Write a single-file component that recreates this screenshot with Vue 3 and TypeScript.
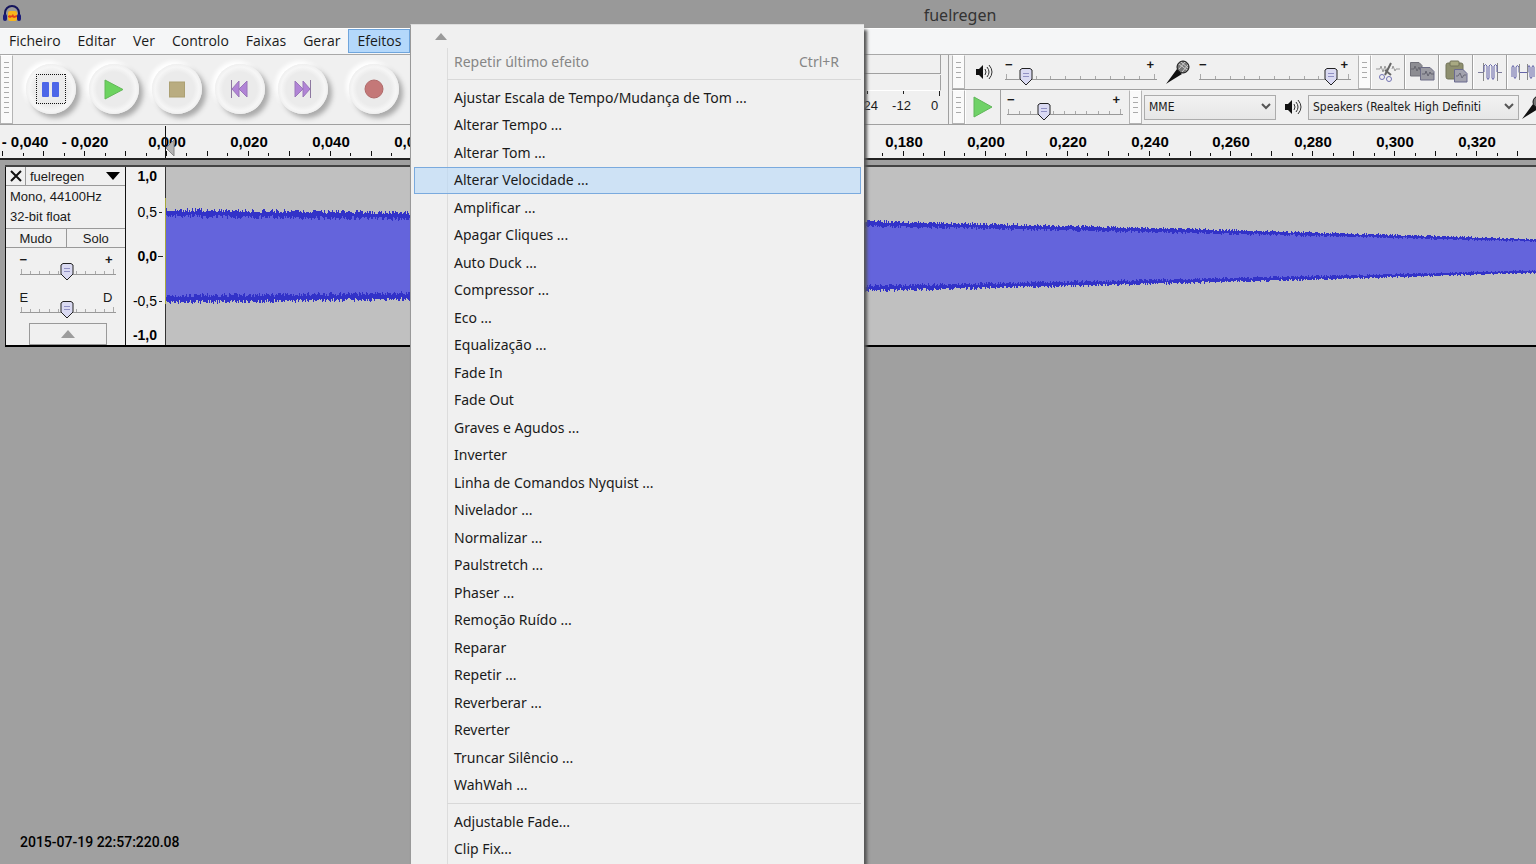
<script setup lang="ts">
import { computed, reactive, ref } from 'vue'

interface MenuEntry {
  label: string
  shortcut?: string
}

const menus: string[] = ['Ficheiro', 'Editar', 'Ver', 'Controlo', 'Faixas', 'Gerar', 'Efeitos']
const openMenu = ref('Efeitos')

const effects: MenuEntry[] = [
  'Ajustar Escala de Tempo/Mudança de Tom ...',
  'Alterar Tempo ...',
  'Alterar Tom ...',
  'Alterar Velocidade ...',
  'Amplificar ...',
  'Apagar Cliques ...',
  'Auto Duck ...',
  'Compressor ...',
  'Eco ...',
  'Equalização ...',
  'Fade In',
  'Fade Out',
  'Graves e Agudos ...',
  'Inverter',
  'Linha de Comandos Nyquist ...',
  'Nivelador ...',
  'Normalizar ...',
  'Paulstretch ...',
  'Phaser ...',
  'Remoção Ruído ...',
  'Reparar',
  'Repetir ...',
  'Reverberar ...',
  'Reverter',
  'Truncar Silêncio ...',
  'WahWah ...',
].map((label) => ({ label }))
const plugins: MenuEntry[] = [{ label: 'Adjustable Fade...' }, { label: 'Clip Fix...' }]
const highlighted = ref('Alterar Velocidade ...')

interface SliderSpec {
  label: string
  low: string
  high: string
  width: number
  ticks: number
  value: number
}

const sliders = reactive<Record<string, SliderSpec>>({
  output: { label: 'Volume de saída', low: '−', high: '+', width: 152, ticks: 11, value: 13 },
  input: { label: 'Volume de entrada', low: '−', high: '+', width: 152, ticks: 11, value: 88 },
  speed: { label: 'Velocidade de reprodução', low: '−', high: '+', width: 116, ticks: 11, value: 31 },
  gain: { label: 'Ganho', low: '−', high: '+', width: 96, ticks: 11, value: 50 },
  pan: { label: 'Panorâmica', low: 'E', high: 'D', width: 96, ticks: 11, value: 50 },
})

const thumbX = (s: SliderSpec): number => Math.round(2 + ((s.width - 4) * s.value) / 100)
const tickX = (s: SliderSpec, i: number): number =>
  Math.round(1 + ((s.width - 4) * i) / (s.ticks - 1)) + 0.5

const host = ref('MME')
const speaker = ref('Speakers (Realtek High Definiti')

/* Timeline: pixels per second and the pixel where time is zero. */
const SCALE = 4094
const ORIGIN = 166
const timeX = (t: number): number => Math.round(ORIGIN + t * SCALE)

const ticks = computed(() => {
  const out: { x: number; h: number }[] = []
  for (let i = -8; i <= 140; i++) out.push({ x: timeX(i * 0.005), h: i % 2 === 0 ? 5 : 3 })
  return out
})
const labels = computed(() => {
  const out: { x: number; text: string }[] = []
  for (let i = -2; i <= 16; i++) {
    const body = (Math.abs(i) * 0.02).toFixed(3).replace('.', ',')
    /* The first label is kept inside the left edge. */
    out.push({ x: Math.max(25, timeX(i * 0.02) + 1), text: i < 0 ? `- ${body}` : body })
  }
  return out
})

/* Decaying envelope with a small jitter on each column. */
let seed = 7
const random = (): number => {
  seed = (seed * 16807) % 2147483647
  return seed / 2147483647
}
const MID = 89
const wave = (() => {
  const peakTop: string[] = []
  const peakBottom: string[] = []
  const rmsTop: string[] = []
  const rmsBottom: string[] = []
  for (let x = 1; x < 2400; x++) {
    const level = Math.max(0, 48.5 - 0.0122 * x - 0.00000757 * x * x)
    const jitter = (level / 46) * 4
    const up = Math.round(MID - level + random() * jitter)
    const down = Math.round(MID + level - random() * jitter)
    const rms = level * 0.82
    const rmsUp = Math.round(MID - rms + (random() - 0.5) * jitter)
    const rmsDown = Math.round(MID + rms - (random() - 0.5) * jitter)
    peakTop.push(`${x},${up} ${x + 1},${up}`)
    peakBottom.unshift(`${x + 1},${down} ${x},${down}`)
    rmsTop.push(`${x},${rmsUp} ${x + 1},${rmsUp}`)
    rmsBottom.unshift(`${x + 1},${rmsDown} ${x},${rmsDown}`)
  }
  return {
    peak: [...peakTop, ...peakBottom].join(' '),
    rms: [...rmsTop, ...rmsBottom].join(' '),
  }
})()
</script>

<template>
  <div class="window">
    <header class="titlebar">
      <svg class="logo" viewBox="0 0 20 18" width="20" height="18" aria-hidden="true">
        <rect x="6" y="6" width="9" height="10" rx="2" fill="#f7b51c" />
        <path d="M6 11l2-1 1 1 2-2 1 2 3-1v2l-3 1-2-1-2 1-2-1z" fill="#e2401b" />
        <path d="M3 13V8a7 7 0 0 1 14 0v5" fill="none" stroke="#14145c" stroke-width="2" />
        <rect x="1" y="9" width="4" height="7" rx="2" fill="#1c1c78" />
        <rect x="15" y="9" width="4" height="7" rx="2" fill="#1c1c78" />
      </svg>
      <h1 class="title">fuelregen</h1>
    </header>

    <nav class="menubar">
      <button
        v-for="m in menus"
        :key="m"
        type="button"
        class="menu-button"
        :class="{ open: m === openMenu }"
        @click="openMenu = m"
      >
        {{ m }}
      </button>
    </nav>

    <section class="toolbars">
      <div class="transport">
        <span class="grip"></span>
        <div class="discs">
          <button type="button" class="disc" aria-label="Pausa">
            <svg width="30" height="30" viewBox="0 0 30 30">
              <path
                d="M0 0.5H30M0 29.5H30M0.5 0V30M29.5 0V30"
                fill="none"
                stroke="#111"
                stroke-dasharray="1 1"
                shape-rendering="crispEdges"
              />
              <rect x="6" y="8" width="7" height="15" rx="1" fill="#4c66e8" />
              <rect x="16" y="8" width="7" height="15" rx="1" fill="#4c66e8" />
            </svg>
          </button>
          <button type="button" class="disc" aria-label="Reproduzir">
            <svg width="30" height="30" viewBox="0 0 30 30">
              <path d="M6 6L24 15.500 6 25z" fill="#6cd35f" stroke="#62b858" />
            </svg>
          </button>
          <button type="button" class="disc" aria-label="Parar">
            <svg width="30" height="30" viewBox="0 0 30 30">
              <rect x="7.500" y="8" width="15" height="15" fill="#b9ac80" stroke="#aca073" />
            </svg>
          </button>
          <button type="button" class="disc" aria-label="Saltar para o início">
            <svg width="30" height="30" viewBox="0 0 30 30">
              <path d="M14 7v16L7 15zM22 7v16l-8-8z" fill="#b184d6" stroke="#9a76ba" />
              <path d="M6.500 6v18" stroke="#8d78a0" />
            </svg>
          </button>
          <button type="button" class="disc" aria-label="Saltar para o fim">
            <svg width="30" height="30" viewBox="0 0 30 30">
              <path d="M7 7v16l8-8zM15 7v16l7-8z" fill="#b184d6" stroke="#9a76ba" />
              <path d="M22.500 6v18" stroke="#8d78a0" />
            </svg>
          </button>
          <button type="button" class="disc record" aria-label="Gravar">
            <svg width="30" height="30" viewBox="0 0 30 30">
              <circle cx="15" cy="15" r="9" fill="#c47878" stroke="#b06a6a" />
            </svg>
          </button>
        </div>
      </div>

      <div class="meter">
        <div class="meter-bar"></div>
        <div class="meter-bar"></div>
        <div class="meter-scale">
          <span>-24</span>
          <span>-12</span>
          <span>0</span>
        </div>
      </div>

      <div class="side">
        <div class="side-row">
          <span class="grip"></span>
          <svg class="speaker lead" width="18" height="18" viewBox="0 0 18 18" aria-hidden="true">
            <path d="M1 6h3l4-4v14l-4-4H1z" fill="#111" />
            <path d="M10 6q2 3 0 6M12 4q4 5 0 10M14 2q6 7 0 14" fill="none" stroke="#333" />
          </svg>
          <label class="slider wide">
            <span class="ends"><b>{{ sliders.output.low }}</b><b>{{ sliders.output.high }}</b></span>
            <svg :width="sliders.output.width" height="22" aria-hidden="true">
              <path class="rail" :d="`M0 14.5H${sliders.output.width}`" />
              <path
                v-for="i in sliders.output.ticks"
                :key="i"
                class="notch"
                :d="`M${tickX(sliders.output, i - 1)} ${i === 1 || i === sliders.output.ticks ? 9 : 11}V14`"
              />
              <g :transform="`translate(${thumbX(sliders.output)} 3)`">
                <path class="thumb" d="M-6 2L-4 0.5H4L6 2V11L0 17L-6 11Z" />
                <path class="thumb-lines" d="M-3 5.5H3M-3 8.5H3" />
              </g>
            </svg>
            <input v-model.number="sliders.output.value" type="range" :aria-label="sliders.output.label" />
          </label>
          <svg class="mic" width="26" height="26" viewBox="0 0 26 26" aria-hidden="true">
            <path d="M1 25L12 10l5 5L4 23z" fill="#111" />
            <circle cx="18" cy="8" r="6" fill="#777" stroke="#111" />
            <path d="M14 5l8 6M16 3l7 6M14 10l6-7M17 13l6-7" stroke="#ccc" />
          </svg>
          <label class="slider wide">
            <span class="ends"><b>{{ sliders.input.low }}</b><b>{{ sliders.input.high }}</b></span>
            <svg :width="sliders.input.width" height="22" aria-hidden="true">
              <path class="rail" :d="`M0 14.5H${sliders.input.width}`" />
              <path
                v-for="i in sliders.input.ticks"
                :key="i"
                class="notch"
                :d="`M${tickX(sliders.input, i - 1)} ${i === 1 || i === sliders.input.ticks ? 9 : 11}V14`"
              />
              <g :transform="`translate(${thumbX(sliders.input)} 3)`">
                <path class="thumb" d="M-6 2L-4 0.5H4L6 2V11L0 17L-6 11Z" />
                <path class="thumb-lines" d="M-3 5.5H3M-3 8.5H3" />
              </g>
            </svg>
            <input v-model.number="sliders.input.value" type="range" :aria-label="sliders.input.label" />
          </label>
          <span class="grip edit-grip"></span>
          <div class="edit">
            <button type="button" class="tool" aria-label="Cortar">
              <svg width="28" height="26" viewBox="0 0 28 26">
                <path d="M2 10h4l1-3 2 6 2-6 2 5 2-4M18 10l1-3 2 5 1-2h4" fill="none" stroke="#999" />
                <path d="M17 4L11 16M11 11l6 5" stroke="#666" stroke-width="2" fill="none" />
                <circle cx="8" cy="18" r="2.500" fill="none" stroke="#7373b4" />
                <circle cx="15" cy="20" r="2.500" fill="none" stroke="#7373b4" />
              </svg>
            </button>
            <button type="button" class="tool" aria-label="Copiar">
              <svg width="28" height="26" viewBox="0 0 28 26">
                <path d="M2.500 3.500H11l3 3V17H2.500z" fill="#8d8d92" stroke="#707078" />
                <path d="M3 10h3l1-3 2 5 2-4 1 3" fill="none" stroke="#66666e" />
                <path d="M12.500 8.500H22l4 4V21H12.500z" fill="#9a9aa2" stroke="#6c6c86" />
                <path d="M14 15h3l1-3 2 5 2-4 1 2h3" fill="none" stroke="#62626e" />
              </svg>
            </button>
            <button type="button" class="tool" aria-label="Colar">
              <svg width="28" height="26" viewBox="0 0 28 26">
                <rect x="4" y="4" width="17" height="16" rx="2" fill="#8e8f6f" stroke="#73745a" />
                <rect x="8" y="2" width="9" height="5" rx="1" fill="#a8a982" stroke="#73745a" />
                <path d="M12.500 10.500H21l4 4V23H12.500z" fill="#a2a2ae" stroke="#6a6a90" />
                <path d="M14 17h2l2-3 2 5 2-3h2" fill="none" stroke="#6a6a78" />
              </svg>
            </button>
            <button type="button" class="tool" aria-label="Aparar">
              <svg width="28" height="26" viewBox="0 0 28 26">
                <path d="M2 13.500h5M21 13.500h5" stroke="#7c7c9c" />
                <path d="M7.500 4v18M21.500 4v18" stroke="#888" />
                <path
                  d="M8 13V7q1.500-3 3 0v12q1 3 2 0V7q1.500-3 3 0v12q1 3 2 0V7q1.500-3 3 0v6"
                  fill="none"
                  stroke="#6464a8"
                />
              </svg>
            </button>
            <button type="button" class="tool" aria-label="Silenciar">
              <svg width="28" height="26" viewBox="0 0 28 26">
                <path
                  d="M2 18V8q1-3 2 0v10q1 3 2 0V8q1-3 3 0v5.500h9V8q1-3 2 0v10q1 3 2 0V8q1-3 2 0v10"
                  fill="none"
                  stroke="#6464a8"
                />
                <path d="M9.500 5v16M17.500 5v16" stroke="#888" />
              </svg>
            </button>
          </div>
        </div>

        <div class="side-row">
          <span class="grip"></span>
          <button type="button" class="play-at-speed" aria-label="Reproduzir à velocidade">
            <svg width="20" height="22" viewBox="0 0 20 22">
              <path d="M1 1L19 11 1 21z" fill="#6fd267" stroke="#5fb658" />
            </svg>
          </button>
          <label class="slider short">
            <span class="ends"><b>{{ sliders.speed.low }}</b><b>{{ sliders.speed.high }}</b></span>
            <svg :width="sliders.speed.width" height="22" aria-hidden="true">
              <path class="rail" :d="`M0 14.5H${sliders.speed.width}`" />
              <path
                v-for="i in sliders.speed.ticks"
                :key="i"
                class="notch"
                :d="`M${tickX(sliders.speed, i - 1)} ${i === 1 || i === sliders.speed.ticks ? 9 : 11}V14`"
              />
              <g :transform="`translate(${thumbX(sliders.speed)} 3)`">
                <path class="thumb" d="M-6 2L-4 0.5H4L6 2V11L0 17L-6 11Z" />
                <path class="thumb-lines" d="M-3 5.5H3M-3 8.5H3" />
              </g>
            </svg>
            <input v-model.number="sliders.speed.value" type="range" :aria-label="sliders.speed.label" />
          </label>
          <span class="grip device-grip"></span>
          <div class="combo host">
            <select v-model="host" aria-label="Sistema de áudio">
              <option>MME</option>
            </select>
            <svg width="12" height="8" viewBox="0 0 12 8" aria-hidden="true">
              <path d="M2 1l4 4 4-4" fill="none" stroke="#555" stroke-width="2" />
            </svg>
          </div>
          <svg class="speaker" width="18" height="18" viewBox="0 0 18 18" aria-hidden="true">
            <path d="M1 6h3l4-4v14l-4-4H1z" fill="#111" />
            <path d="M10 6q2 3 0 6M12 4q4 5 0 10M14 2q6 7 0 14" fill="none" stroke="#333" />
          </svg>
          <div class="combo output">
            <select v-model="speaker" aria-label="Dispositivo de saída">
              <option>Speakers (Realtek High Definiti</option>
            </select>
            <svg width="12" height="8" viewBox="0 0 12 8" aria-hidden="true">
              <path d="M2 1l4 4 4-4" fill="none" stroke="#555" stroke-width="2" />
            </svg>
          </div>
          <svg class="mic trailing" width="26" height="26" viewBox="0 0 26 26" aria-hidden="true">
            <path d="M1 25L12 10l5 5L4 23z" fill="#111" />
            <circle cx="18" cy="8" r="6" fill="#777" stroke="#111" />
          </svg>
        </div>
      </div>
    </section>

    <div class="timeline">
      <svg width="100%" height="33" aria-label="Linha de tempo">
        <rect v-for="t in ticks" :key="t.x" :x="t.x" :y="31 - t.h" width="1" :height="t.h" fill="#111" />
        <text v-for="l in labels" :key="l.x" :x="l.x" y="22" text-anchor="middle">{{ l.text }}</text>
        <path d="M166 23L174 15V31z" fill="#b4b4b4" stroke="#888" />
        <rect x="165" y="1" width="1" height="32" fill="#111" />
      </svg>
    </div>

    <main class="tracks">
      <section class="track">
        <div class="panel">
          <div class="panel-title">
            <button type="button" class="close" aria-label="Fechar faixa">
              <svg width="12" height="12" viewBox="0 0 12 12">
                <path d="M1 1l10 10M11 1L1 11" stroke="#111" stroke-width="2" />
              </svg>
            </button>
            <button type="button" class="name">
              fuelregen
              <svg width="14" height="8" viewBox="0 0 14 8"><path d="M0 0h14L7 8z" fill="#000" /></svg>
            </button>
          </div>
          <p class="info">Mono, 44100Hz<br />32-bit float</p>
          <div class="pair">
            <button type="button">Mudo</button>
            <button type="button">Solo</button>
          </div>
          <div class="panel-sliders">
            <label v-for="s in [sliders.gain, sliders.pan]" :key="s.label" class="slider panel-slider">
              <span class="ends" :class="{ letters: s.low === 'E' }"><b>{{ s.low }}</b><b>{{ s.high }}</b></span>
              <svg :width="s.width" height="22" aria-hidden="true">
                <path class="rail" :d="`M0 14.5H${s.width}`" />
                <path
                  v-for="i in s.ticks"
                  :key="i"
                  class="notch"
                  :d="`M${tickX(s, i - 1)} ${i === 1 || i === s.ticks ? 9 : 11}V14`"
                />
                <g :transform="`translate(${thumbX(s) - 1} 3)`">
                  <path class="thumb" d="M-6 2L-4 0.5H4L6 2V11L0 17L-6 11Z" />
                  <path class="thumb-lines" d="M-3 5.5H3M-3 8.5H3" />
                </g>
              </svg>
              <input v-model.number="s.value" type="range" :aria-label="s.label" />
            </label>
          </div>
          <button type="button" class="collapse" aria-label="Recolher faixa">
            <svg width="14" height="8" viewBox="0 0 14 8"><path d="M0 8h14L7 0z" fill="#9c9c9c" /></svg>
          </button>
        </div>
        <svg class="levels" width="39" height="178" aria-label="Amplitude">
          <g text-anchor="end">
            <text class="strong" x="31" y="14">1,0</text>
            <text x="31" y="50">0,5</text>
            <text class="strong" x="31" y="94">0,0</text>
            <text x="31" y="139">-0,5</text>
            <text class="strong" x="31" y="173">-1,0</text>
          </g>
          <path d="M33 45.500h3M32 89.500h5M33 134.500h3" stroke="#222" />
        </svg>
        <div class="clip">
          <svg width="100%" height="178" aria-label="Forma de onda">
            <polygon :points="wave.peak" fill="#3232c8" shape-rendering="crispEdges" />
            <polygon :points="wave.rms" fill="#6464dc" shape-rendering="crispEdges" />
            <rect width="1" height="178" fill="#333" />
            <rect y="31" width="1" height="106" fill="#a8a83c" />
          </svg>
        </div>
      </section>
    </main>

    <p class="stamp">2015-07-19 22:57:220.08</p>

    <div class="popup" role="menu" aria-label="Efeitos">
      <button type="button" class="scroll-up" aria-label="Deslocar para cima">
        <svg width="12" height="7" viewBox="0 0 12 7"><path d="M0 7h12L6 0z" fill="#9a9a9a" /></svg>
      </button>
      <div class="popup-body">
        <button type="button" role="menuitem" class="entry first" disabled>
          <span>Repetir último efeito</span><span>Ctrl+R</span>
        </button>
        <hr />
        <div class="group effects">
          <button
            v-for="e in effects"
            :key="e.label"
            type="button"
            role="menuitem"
            class="entry"
            :class="{ active: e.label === highlighted }"
            @mouseenter="highlighted = e.label"
          >
            {{ e.label }}
          </button>
        </div>
        <hr />
        <div class="group">
          <button v-for="e in plugins" :key="e.label" type="button" role="menuitem" class="entry first">
            {{ e.label }}
          </button>
        </div>
      </div>
    </div>
  </div>
</template>

<style>
body {
  margin: 0;
  background: #a0a0a0;
}
</style>

<style scoped>
.window {
  position: relative;
  display: flex;
  flex-direction: column;
  min-height: 100vh;
  overflow: hidden;
  background: #a0a0a0;
  color: #1a1a1a;
  font-family: "Noto Sans", "Open Sans", sans-serif;
  font-size: 14px;
}
.window * {
  box-sizing: border-box;
}
button {
  margin: 0;
  padding: 0;
  border: 0;
  background: none;
  color: inherit;
  font: inherit;
}
svg {
  display: block;
  flex: none;
}

/* Title and menu bar */
.titlebar {
  display: grid;
  grid-template-columns: 12fr auto 7fr;
  align-items: center;
  height: 28px;
  padding: 0 2px;
  background: #999;
}
.title {
  grid-column: 2;
  margin: 2px 0 0;
  color: #333;
  font-size: 16px;
  font-weight: 400;
  line-height: 24px;
}
.menubar {
  display: flex;
  height: 27px;
  padding-bottom: 1px;
  border-top: 1px solid #fff;
  border-bottom: 1px solid #a8a8a8;
  background: #f5f6f7;
  font-family: "Open Sans", "Noto Sans", sans-serif;
}
.menu-button {
  margin-right: -1px;
  padding: 0 8px;
  border: 1px solid transparent;
  line-height: 22px;
}
.menu-button.open {
  border-color: #6fa5dc;
  background: #b4d8fb;
}

/* Toolbars */
.toolbars {
  display: flex;
  height: 70px;
  border-bottom: 1px solid #a0a0a0;
  background: #f0f0f0;
}
.grip {
  flex: none;
  width: 13px;
  border: 1px solid #b4b4b4;
  border-top-color: #fff;
  background: repeating-linear-gradient(#aaa 0 1px, #fafafa 1px 5px) center / 5px calc(100% - 12px) no-repeat #fafafa;
}
.transport {
  display: flex;
  flex: none;
  width: 410px;
}
.discs {
  display: flex;
  align-items: center;
  gap: 13px;
  padding: 0 0 2px 13px;
}
.disc {
  display: grid;
  place-items: center;
  width: 50px;
  height: 50px;
  border-radius: 50%;
  background: radial-gradient(circle, #ebebeb 0 48%, #f6f6f6 62%, #f0f0f0 70%);
  box-shadow: 4px 4px 5px #aaa, -3px -3px 4px #fff;
}
.disc.record {
  margin-left: 8px;
}
.meter {
  display: flex;
  flex: none;
  flex-direction: column;
  width: 539px;
  padding-right: 5px;
  border-right: 1px solid #a0a0a0;
}
.meter-bar {
  height: 19px;
  border-right: 1px solid #a0a0a0;
  border-bottom: 1px solid #a0a0a0;
  margin-right: 2px;
}
.meter-bar + .meter-bar {
  height: 16px;
  margin-top: 1px;
  border-bottom-color: #fff;
}
.meter-scale {
  display: grid;
  grid-template-columns: repeat(3, 33px);
  justify-content: end;
  margin-right: -8px;
  background:
    linear-gradient(#222, #222) 457px 0 / 1px 3px no-repeat,
    linear-gradient(#222, #222) 493px 0 / 1px 3px no-repeat,
    linear-gradient(#222, #222) 529px 0 / 1px 5px no-repeat;
  font-family: "Liberation Sans", Arial, sans-serif;
  font-size: 13px;
  line-height: 30px;
  text-align: center;
}
.side {
  display: flex;
  flex: 1;
  flex-direction: column;
  min-width: 0;
  margin-left: 3px;
  overflow: hidden;
}
.side-row {
  display: flex;
  align-items: center;
  height: 34px;
}
.side-row + .side-row {
  height: 35px;
  border-top: 1px solid #a0a0a0;
}
.side-row > .grip {
  align-self: stretch;
}
.lead {
  margin-left: 10px;
  margin-right: 12px;
}
.mic {
  margin: 0 8px;
}
.edit-grip {
  margin-left: 7px;
}
.device-grip {
  margin: 0 2px 0 6px;
}
.edit {
  display: flex;
  align-self: stretch;
}
.tool {
  display: grid;
  flex: none;
  place-items: center;
  width: 34px;
  border-right: 1px solid #a0a0a0;
  border-left: 1px solid #fff;
}
.play-at-speed {
  display: grid;
  flex: none;
  place-items: center;
  align-self: stretch;
  width: 36px;
  margin-right: 6px;
  border-right: 1px solid #a0a0a0;
  border-left: 1px solid #fff;
}
.slider {
  display: grid;
  flex: none;
  align-items: center;
}
.slider > * {
  grid-area: 1 / 1;
}
.wide {
  width: 152px;
}
.short {
  width: 116px;
}
.slider > svg {
  margin-top: 7px;
}
.slider input {
  width: 100%;
  height: 22px;
  margin: 7px 0 0;
  opacity: 0;
}
.ends {
  display: flex;
  align-self: start;
  justify-content: space-between;
  padding-right: 3px;
  font-family: "Liberation Sans", Arial, sans-serif;
  font-size: 13px;
  line-height: 14px;
}
.ends.letters b {
  font-weight: 400;
}
.rail {
  stroke: #999;
}
.notch {
  stroke: #aaa;
}
.thumb {
  fill: #dadaf2;
  stroke: #222;
}
.thumb-lines {
  stroke: #9090c4;
}
.combo {
  display: grid;
  flex: none;
  align-items: center;
}
.combo > * {
  grid-area: 1 / 1;
}
.combo > svg {
  justify-self: end;
  margin-right: 4px;
  pointer-events: none;
}
.combo select {
  width: 100%;
  height: 25px;
  padding: 0 20px 0 4px;
  border: 1px solid #acacac;
  border-radius: 0;
  appearance: none;
  background: linear-gradient(#f2f2f2, #e6e6e6);
  color: #1a1a1a;
  font-family: "DejaVu Sans Condensed", "DejaVu Sans", sans-serif;
  font-size: 12px;
}
.host {
  width: 132px;
  margin-right: 8px;
}
.output {
  width: 211px;
  margin-left: 6px;
}
.trailing {
  margin: 0 0 0 2px;
}

/* Timeline */
.timeline {
  height: 35px;
  border-bottom: 2px solid #222;
  background: #f0f0f0;
}
.timeline text {
  font-family: "Liberation Sans", Arial, sans-serif;
  font-size: 15px;
  font-weight: 700;
}

/* Track */
.tracks {
  padding: 5px 0 0 5px;
}
.track {
  display: flex;
  border-top: 2px solid #444;
  border-bottom: 2px solid #000;
  background: #f0f0f0;
  font-family: "Liberation Sans", Arial, sans-serif;
  font-size: 13px;
}
.panel {
  display: flex;
  flex: none;
  flex-direction: column;
  width: 121px;
  border-right: 1px solid #111;
  border-left: 1px solid #111;
}
.panel-title {
  display: flex;
  height: 19px;
  border-bottom: 1px solid #999;
}
.close {
  display: grid;
  place-items: center;
  width: 20px;
  border-right: 1px solid #999;
}
.name {
  display: flex;
  flex: 1;
  align-items: center;
  justify-content: space-between;
  padding: 0 5px 0 4px;
}
.info {
  margin: 0;
  padding: 1px 4px;
  line-height: 20px;
}
.pair {
  display: grid;
  grid-template-columns: 1fr 1fr;
  height: 20px;
  border-top: 1px solid #999;
  border-bottom: 1px solid #999;
}
.pair button + button {
  border-left: 1px solid #999;
}
.panel-sliders {
  display: flex;
  flex-direction: column;
  align-items: center;
  gap: 9px;
  padding: 5px 0 3px 4px;
}
.panel-slider {
  width: 96px;
}
.collapse {
  display: grid;
  place-items: center;
  align-self: center;
  width: 78px;
  height: 22px;
  margin-right: -4px;
  border: 1px solid #999;
}
.levels {
  font-size: 14px;
}
.levels .strong {
  font-weight: 700;
}
.clip {
  flex: 1;
  min-width: 0;
  background: #c0c0c0;
}
.stamp {
  margin: auto 0 11px 20px;
  color: #000;
  font-family: Roboto, sans-serif;
  font-weight: 500;
  line-height: 22px;
}

/* Effects menu, over the page */
.popup {
  position: absolute;
  top: 24px;
  bottom: 0;
  left: 410px;
  width: 454px;
  padding: 0 3px;
  border-top: 1px solid #ddd;
  border-left: 1px solid #999;
  background: #f0f0f0;
  box-shadow: 3px 6px 3px #555;
}
.scroll-up {
  display: block;
  width: 100%;
  height: 23px;
  padding: 0 0 0 21px;
}
.popup-body {
  height: calc(100% - 23px);
  overflow: hidden;
  background: linear-gradient(#dcdcdc, #dcdcdc) 33px 0 / 1px 100% no-repeat;
}
.entry {
  display: flex;
  align-items: center;
  justify-content: space-between;
  width: 100%;
  padding: 0 21px 0 39px;
  border: 1px solid transparent;
  color: #1a1a1a;
  line-height: 20px;
  text-align: left;
}
.entry.first {
  height: 27px;
}
.entry:disabled {
  color: #868686;
}
.entry.active {
  border-color: #7aaade;
  background: rgba(184, 217, 249, 0.6);
}
.popup hr {
  height: 1px;
  margin: 4px 0 4px 33px;
  border: 0;
  background: #d8d8d8;
}
.group {
  display: grid;
}
.effects {
  grid-auto-rows: 1fr;
  min-height: 715px;
}
</style>
